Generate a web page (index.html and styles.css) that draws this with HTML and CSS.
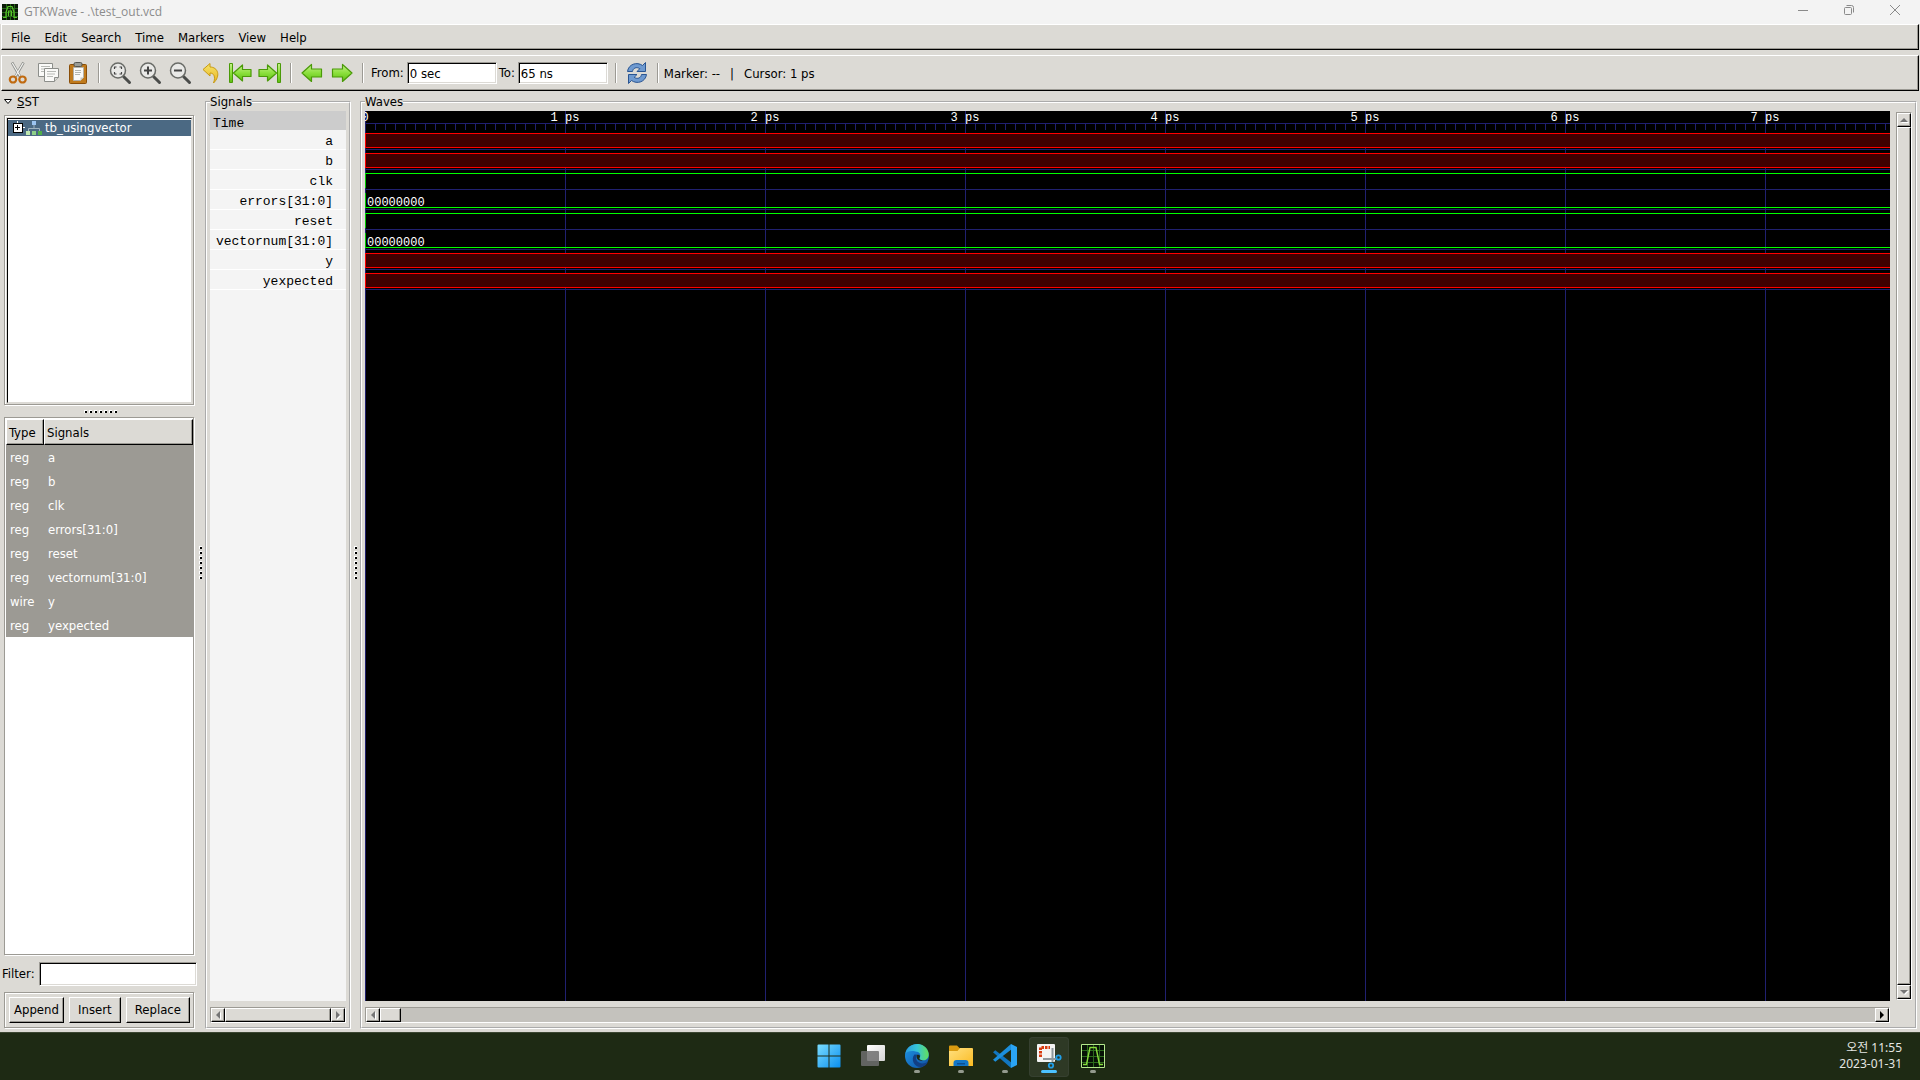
FILE: index.html
```html
<!DOCTYPE html>
<html lang="en">
<head>
<meta charset="utf-8">
<title>GTKWave - .\test_out.vcd</title>
<link rel="stylesheet" href="styles.css">
</head>
<body>
<svg class="defs" width="0" height="0" aria-hidden="true">
  <defs>
    <linearGradient id="green" x1="0" y1="0" x2="0" y2="1"><stop offset="0" stop-color="#c6f08c"/><stop offset=".5" stop-color="#8be03c"/><stop offset="1" stop-color="#5fbe12"/></linearGradient>
    <linearGradient id="gold" x1="0" y1="0" x2="0" y2="1"><stop offset="0" stop-color="#f6e46a"/><stop offset="1" stop-color="#e8b420"/></linearGradient>
    <linearGradient id="win" x1="0" y1="0" x2="1" y2="1"><stop offset="0" stop-color="#7adcff"/><stop offset="1" stop-color="#0a8ff0"/></linearGradient>
    <linearGradient id="folder" x1="0" y1="0" x2="1" y2="1"><stop offset="0" stop-color="#ffe080"/><stop offset="1" stop-color="#fbbb22"/></linearGradient>
    <linearGradient id="edgeTop" x1="0" y1="0" x2="1" y2="0"><stop offset="0" stop-color="#2a9be0"/><stop offset=".5" stop-color="#36c4d8"/><stop offset="1" stop-color="#63e05a"/></linearGradient>
    <linearGradient id="edgeLow" x1="0" y1="0" x2="1" y2="1"><stop offset="0" stop-color="#1e96e6"/><stop offset="1" stop-color="#0f4fa0"/></linearGradient>
    <linearGradient id="desk" x1="0" y1="0" x2="1" y2="1"><stop offset="0" stop-color="#ffffff"/><stop offset="1" stop-color="#d4d4d4"/></linearGradient>
    <g id="lens"><path d="M15.500 15.500 21.500 21.500" stroke="#4a4c4a" stroke-width="3" stroke-linecap="round"/><circle cx="10" cy="9.500" r="7.500" fill="#eeeeec" fill-opacity=".75" stroke="#6a6c68" stroke-width="1.500"/></g>
    <path id="arrow" d="M2 12 11.500 3.500V8H21.500V16H11.500V20.500Z" fill="url(#green)" stroke="#4a9a08" stroke-width="1.200" stroke-linejoin="round"/>
  </defs>
</svg>

<header class="titlebar">
  <svg class="app-icon" viewBox="0 0 16 16" aria-hidden="true"><path fill="#0a1a06" d="M0 0h16v16H0z"/><path d="M0 4.500h16M0 8.500h16M0 12.500h16M4.500 0v16M8.500 0v16M12.500 0v16" stroke="#27681a"/><path d="M1 13.500h3V8l2-5.500h4L12 8v5.500h3M6.500 12V7h3v5" fill="none" stroke="#58c828" stroke-width="1.200"/></svg>
  <h1 class="title">GTKWave - .\test_out.vcd</h1>
  <div class="window-controls">
    <button aria-label="Minimize"><svg viewBox="0 0 12 12"><path d="M1 6.500h10"/></svg></button>
    <button aria-label="Restore"><svg viewBox="0 0 12 12"><rect x="1.500" y="3.500" width="7" height="7" rx="1"/><path d="M3.500 1.500h5a2 2 0 0 1 2 2v5"/></svg></button>
    <button aria-label="Close"><svg viewBox="0 0 12 12"><path d="M1 1l10 10M11 1 1 11"/></svg></button>
  </div>
</header>

<nav class="menubar" aria-label="Menu">
  <button>File</button><button>Edit</button><button>Search</button><button>Time</button><button>Markers</button><button>View</button><button>Help</button>
</nav>

<div class="toolbar" role="toolbar" aria-label="Tools">
  <button class="tool" aria-label="Cut"><svg viewBox="0 0 24 24"><path d="M6 1.500 14 15.500M17.500 1.500 9.500 15.500" stroke="#8c8e8a" stroke-width="2.600"/><path d="M6.300 2 14 15M17.200 2 9.500 15" stroke="#f4f4f2" stroke-width="1.200"/><g fill="none" stroke="#c06a10" stroke-width="2.200"><ellipse cx="7" cy="18.500" rx="3.200" ry="3"/><ellipse cx="16.500" cy="18.500" rx="3.200" ry="3"/></g></svg></button>
  <button class="tool" aria-label="Copy"><svg viewBox="0 0 24 24"><g fill="#fafaf8" stroke="#8c8e8a"><path d="M2.500 2.500h14v13h-14z"/><path d="M8.500 7.500h14v9l-4 4h-10z"/><path d="M22.500 16.500h-4v4" fill="#d8d8d4"/></g><path d="M5 5.500h9M5 8h3M5 10.500h3M11 10.500h9M11 13h8M11 15.500h6" stroke="#b8bab6"/></svg></button>
  <button class="tool" aria-label="Paste"><svg viewBox="0 0 24 24"><rect x="3.500" y="3.500" width="17" height="19" rx="1" fill="#c07a1c" stroke="#8a4e08"/><path d="M7.500 6.500h10v10l-3 3h-7z" fill="#fafaf8" stroke="#b4b2aa"/><path d="M14.500 19.500v-3h3z" fill="#c8c8c2"/><rect x="8" y="1.500" width="8" height="4" rx="1.500" fill="#9a9c96" stroke="#555753"/><path d="M9 9.500h6M9 11.500h6M9 13.500h5" stroke="#b4b6b0"/></svg></button>
  <span class="sep"></span>
  <button class="tool" aria-label="Zoom fit"><svg viewBox="0 0 24 24"><use href="#lens"/><path d="M6.500 8V6h2M11.500 6h2v2M13.500 11v2h-2M8.500 13h-2v-2" fill="none" stroke="#444" stroke-width="1.200"/></svg></button>
  <button class="tool" aria-label="Zoom in"><svg viewBox="0 0 24 24"><use href="#lens"/><path d="M6 9.500h8M10 5.500v8" stroke="#444" stroke-width="2"/></svg></button>
  <button class="tool" aria-label="Zoom out"><svg viewBox="0 0 24 24"><use href="#lens"/><path d="M6 9.500h8" stroke="#444" stroke-width="2"/></svg></button>
  <button class="tool" aria-label="Undo"><svg viewBox="0 0 24 24"><path d="M5 8.500 12 2.500V6c8 0 11 9 3.500 16 2.500-6.500 0-10-3.500-10v3Z" fill="url(#gold)" stroke="#c89a10" stroke-linejoin="round"/></svg></button>
  <button class="tool" aria-label="Go to start"><svg viewBox="0 0 24 24"><path d="M1.500 2.500h3v19h-3z" fill="url(#green)" stroke="#4a9a08"/><path d="M5.500 12 14.500 4v4.500H23v7h-8.500V20Z" fill="url(#green)" stroke="#4a9a08" stroke-width="1.200" stroke-linejoin="round"/></svg></button>
  <button class="tool" aria-label="Go to end"><svg viewBox="0 0 24 24"><path d="M19.500 2.500h3v19h-3z" fill="url(#green)" stroke="#4a9a08"/><path d="M18.500 12 9.500 4v4.500H1v7h8.500V20Z" fill="url(#green)" stroke="#4a9a08" stroke-width="1.200" stroke-linejoin="round"/></svg></button>
  <span class="sep"></span>
  <button class="tool" aria-label="Previous edge"><svg viewBox="0 0 24 24"><use href="#arrow"/></svg></button>
  <button class="tool" aria-label="Next edge"><svg viewBox="0 0 24 24"><use href="#arrow" transform="matrix(-1 0 0 1 24 0)"/></svg></button>
  <span class="sep"></span>
  <label class="range">From:<input type="text" value="0 sec"></label>
  <label class="range">To:<input type="text" value="65 ns"></label>
  <span class="sep"></span>
  <button class="tool" aria-label="Reload"><svg viewBox="0 0 24 24"><g fill="#6f9ad0" stroke="#2a5592" stroke-linejoin="round"><path id="half" d="M2.500 10.500C3.500 3 12 .5 17.500 4.500L20.500 1.500V10.500H12L14.800 7.700C11.500 5.500 8 7 7.500 10.500Z"/><use href="#half" transform="rotate(180 12 12)"/></g></svg></button>
  <span class="sep"></span>
  <p class="status"><span>Marker: --</span><span class="bar">|</span><span>Cursor: 1 ps</span></p>
</div>

<main class="workspace">
  <aside class="sst">
    <h2 class="expander"><svg viewBox="0 0 8 8" aria-hidden="true"><path d="M.5 1.500h7L4 5.500z" fill="#fff" stroke="#000"/></svg><span><u>S</u>ST</span></h2>
    <div class="etched tree">
      <div class="tree-view">
        <div class="node">
          <svg class="plus" viewBox="0 0 13 12" aria-hidden="true"><path d="M5.500 0v2M10 6.500h3" stroke="#fff"/><path d="M1 2h9v9H1z" fill="#fff" stroke="#000"/><path d="M3 6.500h5M5.500 4v5" stroke="#000"/></svg>
          <svg class="module" viewBox="0 0 16 16" aria-hidden="true"><path d="M8 5v4M2.500 12V8.500h11V12" fill="none" stroke="#9fb2bd"/><path fill="#9cc4f0" d="M6 1h4v4H6z"/><path fill="#c0e8b0" d="M0 11h4v4H0z"/><path fill="#8fd088" d="M6 11h4v4H6z"/><path fill="#4faf48" d="M12 11h4v4h-4z"/></svg>
          <span>tb_usingvector</span>
        </div>
      </div>
    </div>
    <div class="grip grip-h"><i></i><i></i><i></i><i></i><i></i><i></i><i></i></div>
    <div class="etched list">
      <table>
        <thead><tr><th scope="col" class="type">Type</th><th scope="col">Signals</th></tr></thead>
        <tbody>
          <tr><td>reg</td><td>a</td></tr>
          <tr><td>reg</td><td>b</td></tr>
          <tr><td>reg</td><td>clk</td></tr>
          <tr><td>reg</td><td>errors[31:0]</td></tr>
          <tr><td>reg</td><td>reset</td></tr>
          <tr><td>reg</td><td>vectornum[31:0]</td></tr>
          <tr><td>wire</td><td>y</td></tr>
          <tr><td>reg</td><td>yexpected</td></tr>
        </tbody>
      </table>
    </div>
    <label class="filter">Filter:<input type="text"></label>
    <div class="etched actions"><button>Append</button><button>Insert</button><button>Replace</button></div>
  </aside>

  <div class="grip grip-v"><i></i><i></i><i></i><i></i><i></i><i></i><i></i></div>

  <fieldset class="frame signals">
    <legend>Signals</legend>
    <div class="names">
      <div class="time">Time</div>
      <ul><li>a</li><li>b</li><li>clk</li><li>errors[31:0]</li><li>reset</li><li>vectornum[31:0]</li><li>y</li><li>yexpected</li></ul>
    </div>
    <div class="scroll scroll-h off">
      <button aria-label="Scroll left"><svg viewBox="0 0 8 8"><path d="M6 0v8L2 4z"/></svg></button><span class="thumb full"></span><button aria-label="Scroll right"><svg viewBox="0 0 8 8"><path d="M2 0v8l4-4z"/></svg></button>
    </div>
  </fieldset>

  <div class="grip grip-v"><i></i><i></i><i></i><i></i><i></i><i></i><i></i></div>

  <fieldset class="frame waves">
    <legend>Waves</legend>
    <div class="canvas">
      <div class="ruler"><span>0</span><span>1 ps</span><span>2 ps</span><span>3 ps</span><span>4 ps</span><span>5 ps</span><span>6 ps</span><span>7 ps</span></div>
      <div class="trace"><div class="undef"></div></div>
      <div class="trace"><div class="undef"></div></div>
      <div class="trace"><div class="high"></div></div>
      <div class="trace"><div class="bus">00000000</div></div>
      <div class="trace"><div class="high"></div></div>
      <div class="trace"><div class="bus">00000000</div></div>
      <div class="trace"><div class="undef"></div></div>
      <div class="trace"><div class="undef"></div></div>
    </div>
    <div class="scroll scroll-v off">
      <button aria-label="Scroll up"><svg viewBox="0 0 8 8"><path d="M0 6h8L4 2z"/></svg></button><span class="thumb full"></span><button aria-label="Scroll down"><svg viewBox="0 0 8 8"><path d="M0 2h8L4 6z"/></svg></button>
    </div>
    <div class="scroll scroll-h">
      <button class="off" aria-label="Scroll left"><svg viewBox="0 0 8 8"><path d="M6 0v8L2 4z"/></svg></button><span class="thumb"></span><span class="trough"></span><button aria-label="Scroll right"><svg viewBox="0 0 8 8"><path d="M2 0v8l4-4z"/></svg></button>
    </div>
  </fieldset>
</main>

<footer class="taskbar">
  <div class="apps">
    <button aria-label="Start"><svg viewBox="0 0 24 24"><path fill="url(#win)" d="M.5 1.500a1 1 0 0 1 1-1H11.500V11.500H.5zM12.500.5H22.500a1 1 0 0 1 1 1V11.500H12.500zM.5 12.500H11.500V23.500H1.500a1 1 0 0 1-1-1zM12.500 12.500H23.500V22.500a1 1 0 0 1-1 1H12.500z"/></svg></button>
    <button aria-label="Task view"><svg viewBox="0 0 24 24"><rect x="6" y="1" width="18" height="16" rx="1" fill="url(#desk)"/><rect x="0" y="7" width="18" height="15" rx="1" fill="#6e6e6e" fill-opacity=".85"/></svg></button>
    <button class="open" aria-label="Edge"><svg viewBox="0 0 24 24"><circle cx="12" cy="12" r="12" fill="url(#edgeLow)"/><path d="M.3 10C2-1.500 19-4 23.300 8c1.500 5-1.300 8.300-5 8.300-3.300 0-4.600-1.500-3.600-2.800C16.500 11 14.500 7.500 10.500 7.500 6 6.500 1.500 7.500.3 10Z" fill="url(#edgeTop)"/><path d="M9.500 10.500c-4 4.500-.5 12.500 6 12.500 3.500 0 6.500-2.500 7.200-5-4 2.500-9.700 1.500-11.200-2-.9-2-.5-4 1-5.300Z" fill="#123f84"/><path d="M12 11c2-1 3.800.5 2.700 2.500-1 1.300.3 2.800 3.600 2.800-3.800 1.400-8-1.300-6.300-5.300Z" fill="#1e2a14"/></svg></button>
    <button class="open" aria-label="File Explorer"><svg viewBox="0 0 24 24"><path d="M0 2.500a1 1 0 0 1 1-1h7l3 3v4H0z" fill="#d99a10"/><path d="M0 7h8.500L11 4H23a1 1 0 0 1 1 1V22H0z" fill="url(#folder)"/><path d="M4.500 22v-3a3 3 0 0 1 3-3h9a3 3 0 0 1 3 3v3z" fill="#1276c8"/><path d="M8 19h8v1.500H8z" fill="#0c4f94"/></svg></button>
    <button class="open" aria-label="Visual Studio Code"><svg viewBox="0 0 24 24"><path d="M0 8.300 2.300 6.300 18 18.200V24z" fill="#1276c0"/><path d="M0 15.700 2.300 17.700 18 5.800V0z" fill="#1c8fdc"/><path d="M18 0 24 3v18l-6 3z" fill="#2aa4f4"/></svg></button>
    <button class="open active" aria-label="Snipping Tool"><svg viewBox="0 0 24 24"><rect x="0" y="0" width="18" height="18" rx="1" fill="#f4f4f4"/><path d="M3.500 13V3.500H13" fill="none" stroke="#d83b10" stroke-width="3" stroke-dasharray="2.500 1"/><path d="M15.500 4v14M6 15h13" stroke="#8e979c" stroke-width="2"/><g fill="none" stroke="#209ee8" stroke-width="1.800"><circle cx="21.500" cy="13.500" r="2.200"/><circle cx="14" cy="21.500" r="2.200"/></g></svg></button>
    <button class="open" aria-label="GTKWave"><svg viewBox="0 0 24 24"><path fill="#071206" stroke="#b4e88c" d="M.5.500h23v23H.5z"/><path d="M1 6.500h22M1 12.500h22M1 18.500h22M6.500 1v22M12.500 1v22M18.500 1v22" stroke="#2c6a1c"/><path d="M2 20.500h3.500L9 3.500h6l3.500 17H22" fill="none" stroke="#86dc3c" stroke-width="1.400"/></svg></button>
  </div>
  <time class="clock" datetime="2023-01-31T11:55"><span>오전 11:55</span><span>2023-01-31</span></time>
</footer>
</body>
</html>
```

FILE: styles.css
```css
:root {
  --bg: #dcdad5;
  --dark: #9c9a94;
  --select: #4b6983;
  --grid: #202070;
  --ui: "DejaVu Sans Condensed", "Noto Sans", sans-serif;
  --mono: "Liberation Mono", monospace;
}

* { box-sizing: border-box; }

body {
  margin: 0;
  height: 100vh;
  display: flex;
  flex-direction: column;
  overflow: hidden;
  background: var(--bg);
  color: #000;
  font: 13px/16px var(--ui);
}

button, input { font: inherit; color: inherit; }
button { padding: 0; border: 0; background: none; }
svg { display: block; fill: none; }
h1, h2, p, ul { margin: 0; padding: 0; font: inherit; list-style: none; }
.defs { position: absolute; }

/* Title bar */
.titlebar {
  flex: none;
  display: flex;
  align-items: center;
  height: 24px;
  padding: 0 2px;
  background: #f3f3f3;
  color: #8c8c8c;
  font: 12px/16px "Open Sans", sans-serif;
}
.app-icon { width: 16px; height: 16px; margin-bottom: 1px; }
.title { flex: 1; padding-left: 6px; }
.window-controls { display: flex; height: 100%; }
.window-controls button { width: 46px; height: 20px; display: grid; place-items: center; }
.window-controls svg { width: 12px; height: 12px; stroke: #8a8a8a; }

/* Raised GTK bars and buttons */
.menubar, .toolbar, th, .actions button, .scroll button, .thumb {
  border: 1px solid;
  border-color: #fff #000 #000 #fff;
  box-shadow: inset -1px -1px var(--dark);
  background: var(--bg);
}

.menubar {
  flex: none;
  display: flex;
  height: 26px;
  margin: 0 1px;
  padding: 1px 2px 0;
}
.menubar button { padding: 0 7px; }

.toolbar {
  flex: none;
  display: flex;
  align-items: center;
  height: 36px;
  margin: 5px 1px 2px;
  padding: 0 1px;
}
.tool { width: 30px; height: 30px; display: grid; place-items: center; }
.tool svg { width: 24px; height: 24px; }
.sep {
  width: 2px;
  height: 20px;
  margin: 0 5px;
  border-left: 1px solid var(--dark);
  border-right: 1px solid #fff;
}
.range { display: flex; align-items: center; gap: 3px; padding-left: 2px; white-space: nowrap; }
.range + .sep { margin-left: 7px; }
.range input { width: 90px; padding-top: 1px; }
.status { display: flex; padding-top: 1px; white-space: pre; }
.status .bar { padding: 0 10px; }

input {
  height: 22px;
  padding: 0 2px;
  border: 1px solid;
  border-color: var(--dark) #fff #fff var(--dark);
  box-shadow: inset 1px 1px #000, inset -1px -1px var(--bg);
  background: #fff;
  outline: 0;
}

/* Panes */
.workspace {
  flex: 1;
  min-height: 0;
  display: grid;
  grid-template-columns: 198px 7px 146px 9px minmax(0, 1fr);
  padding: 0 3px 3px 0;
}
.sst { display: flex; flex-direction: column; min-height: 0; }
.expander { display: flex; align-items: center; gap: 5px; height: 18px; padding-left: 4px; }
.expander svg { width: 8px; height: 8px; }
.etched {
  margin: 0 4px;
  border: 1px solid var(--dark);
  box-shadow: 1px 1px #fff, inset 1px 1px #fff;
}
.tree { flex: none; height: 290px; margin-top: 4px; padding: 2px 1px 1px 2px; }
.tree-view {
  height: 100%;
  padding: 1px 0;
  border: 1px solid;
  border-color: #000 var(--bg) var(--bg) #000;
  background: #fff;
}
.node { display: flex; align-items: center; height: 16px; padding-left: 4px; background: var(--select); color: #fff; line-height: 18px; }
.plus { width: 13px; height: 12px; margin: 0 1px 2px 0; shape-rendering: crispEdges; }
.module { width: 16px; height: 16px; margin-right: 3px; }

.grip { display: flex; align-items: center; justify-content: center; gap: 2px; }
.grip i { width: 3px; height: 3px; background: linear-gradient(#000, #000) 1px 1px / 2px 2px no-repeat #fff; }
.grip-h { flex: none; height: 12px; padding-left: 3px; }
.grip-v { flex-direction: column; padding: 3px 2px 0 0; }
.signals + .grip-v { padding-right: 0; }

.list { flex: 1; min-height: 0; padding: 1px 0 0 1px; background: #fff; }
.list table { width: 100%; border-collapse: separate; border-spacing: 0; }
.list th { height: 26px; padding: 1px 2px 0; font-weight: normal; text-align: left; }
.list .type { width: 38px; }
.list td { height: 24px; padding: 1px 4px 0; background: #9c9a94; color: #fff; }

.filter { flex: none; display: flex; align-items: center; gap: 4px; padding: 7px 1px 6px 2px; }
.filter input { flex: 1; min-width: 0; height: 24px; }
.actions {
  flex: none;
  display: flex;
  justify-content: space-between;
  height: 36px;
  margin-bottom: 1px;
  padding: 4px 3px 4px 4px;
}
.actions button { padding: 0 8px; }
.actions button:first-child { padding: 0 4px; }

/* Framed views */
.frame {
  display: grid;
  grid-template-rows: minmax(0, 1fr) 16px;
  gap: 6px;
  min-width: 0;
  min-height: 0;
  margin: 0;
  padding: 0 3px 4px;
  border: 2px groove #fff;
}
.frame legend { height: 18px; padding: 0; line-height: 18px; }
.waves { grid-template-columns: minmax(0, 1fr) 16px; }

.names { background: #f4f4f4; font: 13px/19px var(--mono); }
.time { height: 19px; padding: 3px 3px 0; background: #ccc; }
.names li { height: 20px; padding: 2px 13px 0 0; border-bottom: 1px solid #fff; text-align: right; }

.canvas {
  overflow: hidden;
  background: repeating-linear-gradient(90deg, var(--grid) 0 1px, transparent 1px 200px) #000;
  color: #fff;
  font: 12px/14px var(--mono);
}
.ruler {
  display: flex;
  height: 19px;
  background:
    linear-gradient(var(--grid), var(--grid)) 0 12px / 100% 1px no-repeat,
    repeating-linear-gradient(90deg, var(--grid) 0 1px, transparent 1px 10px) 0 12px / 100% 7px no-repeat;
}
.ruler span { flex: none; width: 200px; text-align: center; }
.ruler span:first-child { margin-left: -100px; }
.trace { height: 20px; padding: 3px 0 1px; border-bottom: 1px solid var(--grid); }
.trace div { height: 15px; }
.undef { border: 1px solid #f00; border-right: 0; background: #400000; }
.high { border-top: 1px solid #0f0; border-left: 1px solid #0c0; }
.bus { padding: 4px 0 0 1px; border-bottom: 1px solid #0f0; border-left: 1px solid #0c0; line-height: 13px; }

/* Scrollbars */
.scroll { display: flex; border: 1px solid; border-color: var(--dark) #fff #fff var(--dark); background: #c4c2bd; }
.scroll button { flex: none; width: 14px; height: 14px; display: grid; place-items: center; }
.scroll svg { width: 8px; height: 8px; fill: #000; }
.off svg { fill: #757575; filter: drop-shadow(1px 1px #fff); }
.scroll-v { flex-direction: column; margin: 1px 0; }
.thumb { width: 21px; }
.full { flex: 1; width: auto; }
.trough { flex: 1; }

/* Taskbar */
.taskbar {
  flex: none;
  display: grid;
  grid-template-columns: 1fr auto 1fr;
  align-items: center;
  height: 48px;
  padding: 0 18px 0 20px;
  border-top: 1px solid #3c4632;
  background: #1e2a14;
  color: #e4e6e2;
}
.apps { grid-column: 2; display: flex; gap: 4px; }
.apps button {
  display: grid;
  grid-template-rows: 33px 3px;
  place-items: center;
  width: 40px;
  height: 40px;
  border-radius: 4px;
}
.apps svg { width: 24px; height: 24px; margin-top: 5px; overflow: visible; }
.apps .open::after { content: ""; width: 6px; height: 3px; border-radius: 2px; background: #949a8e; }
.apps .active { background: #2e3925; box-shadow: inset 0 0 0 1px #364030; }
.apps .active::after { width: 16px; background: #4cc2ff; }
.clock {
  display: flex;
  flex-direction: column;
  padding-bottom: 2px;
  text-align: right;
  font-size: 12px;
  font-family: "Noto Sans", "Noto Sans CJK KR", sans-serif;
}
```
